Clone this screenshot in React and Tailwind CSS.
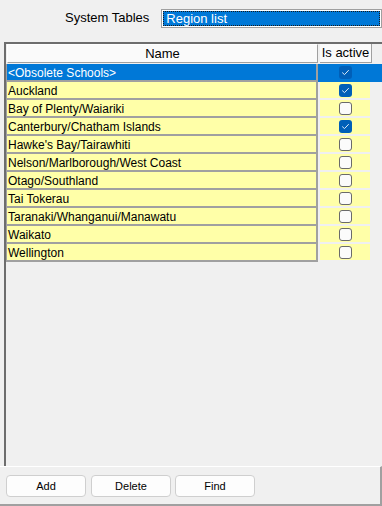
import React from 'react'

const regions = [
  { name: '<Obsolete Schools>', active: true },
  { name: 'Auckland', active: true },
  { name: 'Bay of Plenty/Waiariki', active: false },
  { name: 'Canterbury/Chatham Islands', active: true },
  { name: "Hawke's Bay/Tairawhiti", active: false },
  { name: 'Nelson/Marlborough/West Coast', active: false },
  { name: 'Otago/Southland', active: false },
  { name: 'Tai Tokerau', active: false },
  { name: 'Taranaki/Whanganui/Manawatu', active: false },
  { name: 'Waikato', active: false },
  { name: 'Wellington', active: false },
]

function CheckBox({ checked }) {
  if (checked) {
    return (
      <div className="w-[13px] h-[13px] rounded-[3px] bg-[#005fb8] flex items-center justify-center">
        <svg width="9" height="9" viewBox="0 0 9 9" fill="none">
          <path d="M1.5 4.8 L3.5 6.6 L7.5 2.4" stroke="#dbe9f7" strokeWidth="1" strokeLinecap="round" strokeLinejoin="round" />
        </svg>
      </div>
    )
  }
  return <div className="w-[13px] h-[13px] rounded-[3px] border border-[#6a6a6a] bg-[#fbfbfb]" />
}

function Row({ region, selected }) {
  return (
    <div className={`flex h-[18px] ${selected ? 'bg-[#0078d7]' : ''}`}>
      <div
        className={`w-[312px] h-[18px] border-l border-r-2 border-b-2 border-[#a0a0a0] pl-[1px] text-[12px] leading-[18px] whitespace-nowrap ${
          selected ? 'bg-[#0078d7] text-white' : 'bg-[#ffffa8] text-black'
        }`}
      >
        {region.name}
      </div>
      <div
        className={`ml-[2px] w-[50px] h-[16px] flex items-center justify-center ${
          selected ? 'bg-[#0078d7]' : 'bg-[#ffffa8]'
        }`}
      >
        <CheckBox checked={region.active} />
      </div>
    </div>
  )
}

export default function App() {
  return (
    <div
      className="w-[382px] h-[506px] bg-[#f0f0f0] flex flex-col overflow-hidden"
      style={{ fontFamily: '"Liberation Sans", Arial, sans-serif' }}
    >
      <div className="h-[42px] flex items-start">
        <div className="ml-[65px] mt-[10px] text-[13px] leading-[16px] text-black">System Tables</div>
        <div className="ml-[12px] mt-[9px] flex-1 h-[19px] border border-[#a0a0a0] p-[1px] bg-white">
          <div className="h-full bg-[#0078d7] border border-dotted border-[#1a1a1a] text-white text-[13px] leading-[14px] pl-[2px]">
            Region list
          </div>
        </div>
      </div>

      <div className="ml-[4px] h-[424px] border-t-2 border-l-2 border-[#6d6d6d] flex flex-col">
        <div className="flex h-[20px] ml-[1px] gap-[2px]">
          <div className="w-[311px] h-[19px] bg-[#fafafa] border-t border-l border-[#ffffff] border-r border-b border-r-[#a0a0a0] border-b-[#a0a0a0] text-[13px] leading-[17px] text-center text-black">
            Name
          </div>
          <div className="w-[52px] h-[19px] bg-[#fafafa] border-r border-b border-[#a0a0a0] text-[13px] leading-[17px] text-center text-black">
            Is active
          </div>
        </div>
        <div className="flex flex-col">
          {regions.map((r, i) => (
            <Row key={r.name} region={r} selected={i === 0} />
          ))}
        </div>
      </div>

      <div className="flex-1 border-t border-white border-r-2 border-b-2 border-r-[#a0a0a0] border-b-[#a0a0a0] flex items-start pl-[6px] pt-[8px]">
        <button className="w-[80px] h-[22px] rounded-[4px] border border-[#cfcfcf] bg-[#fdfdfd] text-[11px] text-black">
          Add
        </button>
        <button className="ml-[5px] w-[80px] h-[22px] rounded-[4px] border border-[#cfcfcf] bg-[#fdfdfd] text-[11px] text-black">
          Delete
        </button>
        <button className="ml-[4px] w-[80px] h-[22px] rounded-[4px] border border-[#cfcfcf] bg-[#fdfdfd] text-[11px] text-black">
          Find
        </button>
      </div>
    </div>
  )
}
